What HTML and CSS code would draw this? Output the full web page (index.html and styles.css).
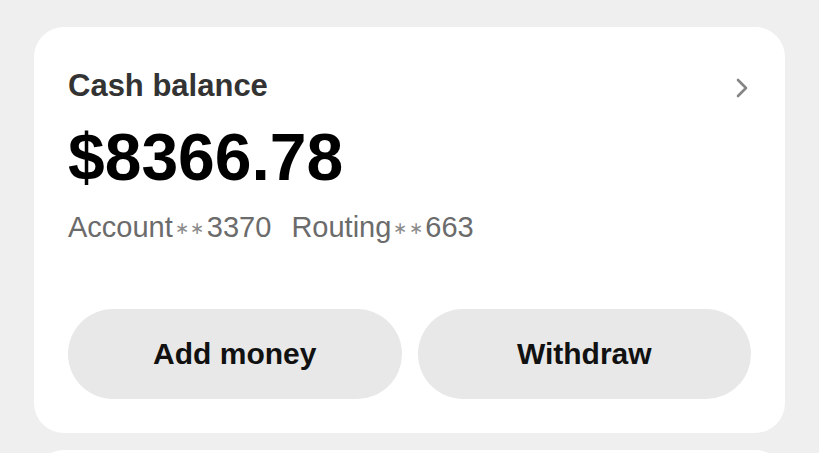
FILE: index.html
```html
<!DOCTYPE html>
<html lang="en">
<head>
  <meta charset="UTF-8" />
  <title>Cash balance</title>
  <link rel="stylesheet" href="styles.css">
</head>
<body>
  <!-- Cash card -->
  <div class="card">
    <div class="card-header">
      <h2>Cash balance</h2>
      <svg class="chevron" width="14" height="22" viewBox="0 0 14 22">
        <path d="M3 3 L11 11 L3 19" fill="none" stroke="#858585" stroke-width="2.6" stroke-linecap="round" stroke-linejoin="round"/>
      </svg>
    </div>
    <div class="amount">$8366.78</div>
    <div class="account-info">
      <span>Account<span class="stars">∗∗</span>3370</span>
      <span class="routing">Routing<span class="stars">∗∗</span>663</span>
    </div>
    <div class="buttons">
      <button class="pill-btn">Add money</button>
      <button class="pill-btn">Withdraw</button>
    </div>
  </div>

  <!-- Next card, only its top edge shows -->
  <div class="next-card-clip">
    <div class="next-card"></div>
  </div>
</body>
</html>
```

FILE: styles.css
```css
body {
  font-family: 'Liberation Sans', Arial, sans-serif;
  background: #efefef;
  margin: 0;
  padding: 27px 34px 0 34px;
}

.card {
  background: white;
  border-radius: 30px;
  padding: 41px 34px 34px 34px;
}

.card-header {
  display: flex;
  align-items: center;
  justify-content: space-between;
}

.card-header h2 {
  margin: 0;
  font-size: 31px;
  line-height: 36px;
  font-weight: bold;
  color: #333;
}

.chevron {
  margin-right: 2px;
  margin-top: 4px;
}

.amount {
  margin-top: 15px;
  font-size: 66px;
  line-height: 76px;
  font-weight: bold;
  color: #000;
}

.account-info {
  margin-top: 16px;
  font-size: 29px;
  line-height: 32px;
  height: 32px;
  color: #6b6b6b;
}

.stars {
  font-size: 17px;
  line-height: 1;
  letter-spacing: 1.5px;
  color: #8a8a8a;
  margin: 0 1px 0 2px;
  vertical-align: 3px;
}

.routing {
  margin-left: 12px;
}

.buttons {
  display: flex;
  gap: 16px;
  margin-top: 66px;
}

.pill-btn {
  flex: 1;
  height: 90px;
  border: none;
  border-radius: 45px;
  background: #e8e8e8;
  font-family: 'Liberation Sans', Arial, sans-serif;
  font-size: 30px;
  font-weight: bold;
  color: #111;
  cursor: pointer;
}

.next-card-clip {
  margin-top: 17px;
  height: 3px;
  overflow: hidden;
}

.next-card {
  background: white;
  border-radius: 30px;
  height: 60px;
}
```
